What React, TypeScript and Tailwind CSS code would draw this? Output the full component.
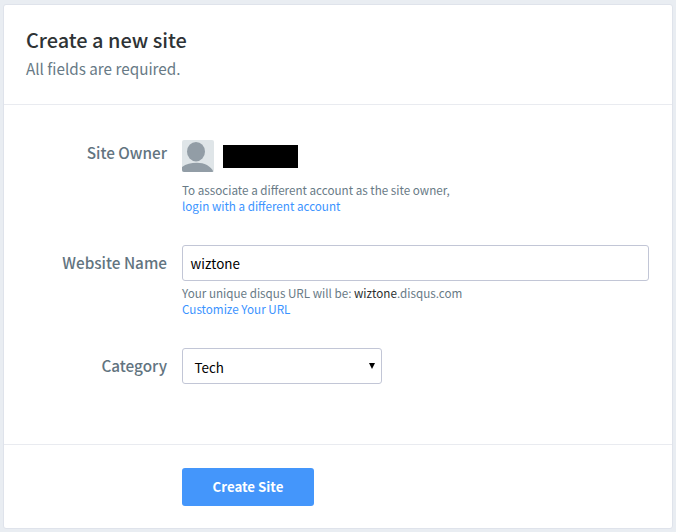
import type { ReactNode } from "react";

function Label({ children }: { children: ReactNode }) {
  return (
    <div className="mr-[15px] w-[141px] shrink-0 text-right text-[15.3px] leading-6 font-medium whitespace-nowrap text-[#62747f]">
      {children}
    </div>
  );
}

function Avatar() {
  return (
    <svg className="h-8 w-8 rounded-[2px]" viewBox="0 0 32 32">
      <rect width="32" height="32" fill="#dfe5e8" />
      <ellipse cx="14" cy="11.7" rx="9" ry="9.7" fill="#929da6" />
      <path d="M0 32V27C4 24 9 22.8 15 22.8C22 22.8 29 26 31.5 32Z" fill="#929da6" />
    </svg>
  );
}

export default function App() {
  return (
    <div className="h-[532px] w-[676px] overflow-hidden bg-[#e9edf2] pt-1 pl-[3px] font-['Noto_Sans_CJK_SC','Noto_Sans',sans-serif]">
      <main className="flex h-[525px] w-[670px] flex-col rounded-[3px] border border-[#dfe3eb] bg-white">
        <header className="h-[100px] border-b border-[#e9ebf0] pt-[21px] pl-[22px] whitespace-nowrap">
          <h1 className="text-[19.9px] leading-[28px] font-medium text-[#2e3335]">Create a new site</h1>
          <p className="mt-px text-[15.25px] leading-[26px] text-[#687a86]">All fields are required.</p>
        </header>

        <section className="h-[340px] border-b border-[#e9ebf0] pt-[35px] pl-[22px]">
          <div className="flex h-[105px]">
            <Label>Site Owner</Label>
            <div className="whitespace-nowrap">
              <div className="flex items-center gap-[9px]">
                <Avatar />
                <div className="h-[23px] w-[75px] bg-black" />
              </div>
              <p className="mt-[10px] text-[11.67px] leading-4 text-[#687a86]">
                To associate a different account as the site owner,
                <a className="block text-[#3a93ff]">login with a different account</a>
              </p>
            </div>
          </div>

          <div className="flex h-[103px]">
            <div className="pt-[5px]"><Label>Website Name</Label></div>
            <div className="w-[467px] whitespace-nowrap">
              <div className="h-9 rounded-[3px] border border-[#c2c6d6] pl-[7.5px] text-[13.4px] leading-[34px] text-black">wiztone</div>
              <p className="mt-[4px] text-[11.67px] leading-4 text-[#687a86]">
                Your unique disqus URL will be: <span className="text-[#2a2e2e]">wiztone</span>.disqus.com
                <a className="block text-[#3a93ff]">Customize Your URL</a>
              </p>
            </div>
          </div>

          <div className="flex">
            <div className="pt-[5px]"><Label>Category</Label></div>
            <div className="flex h-9 w-[200px] justify-between rounded-[3px] border border-[#c2c6d6] pr-[6px] pl-[11.5px] text-[13.4px] leading-[37px] text-black">
              Tech
              <svg className="mt-[14px] h-[6px] w-[6px]" viewBox="0 0 6 6"><path d="M0 0H6L3 6Z" fill="#000" /></svg>
            </div>
          </div>
        </section>

        <footer className="pt-[23px] pl-[178px]">
          <button className="h-[38px] w-[132px] rounded-[3px] bg-[#4496fb] text-[13.25px] leading-[38px] font-bold whitespace-nowrap text-white">Create Site</button>
        </footer>
      </main>
    </div>
  );
}
